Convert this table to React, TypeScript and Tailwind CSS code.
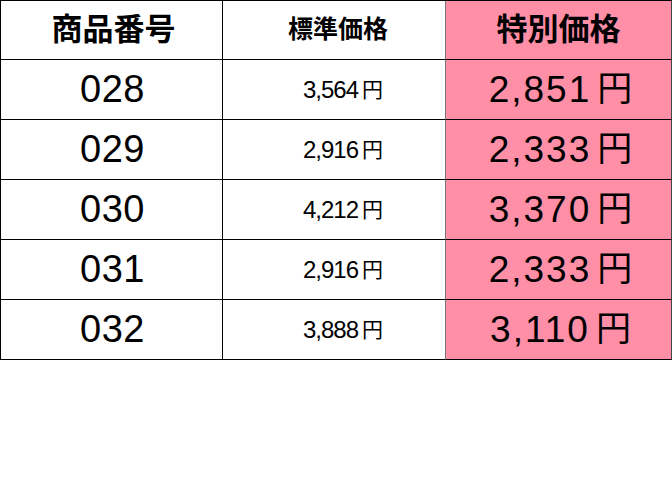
const rows = [
  { code: '028', normal: '3,564', special: '2,851' },
  { code: '029', normal: '2,916', special: '2,333' },
  { code: '030', normal: '4,212', special: '3,370' },
  { code: '031', normal: '2,916', special: '2,333' },
  { code: '032', normal: '3,888', special: '3,110' },
]

const font = { fontFamily: '"Liberation Sans", "Noto Sans CJK JP", sans-serif' }

export default function App() {
  return (
    <div className="w-[672px] h-[481px] bg-white text-black" style={font}>
      <div className="grid grid-cols-[222px_223px_226px] border-l border-t border-black">
        {/* Header */}
        <div className="h-[59px] border-r border-b border-black flex items-center justify-center text-[31px] font-bold pl-[4px]">
          商品番号
        </div>
        <div className="h-[59px] border-r border-b border-black border-r-[#777] flex items-center justify-center text-[25px] font-bold pl-[8px]">
          標準価格
        </div>
        <div className="h-[59px] border-r border-b border-black border-r-[#444] bg-[#ff8ea7] flex items-center justify-center text-[31px] font-bold">
          特別価格
        </div>

        {rows.map(r => (
          <div key={r.code} className="contents">
            <div className="h-[60px] border-r border-b border-black flex items-center justify-center text-[38px] tracking-[0.5px] pl-[2px]">
              {r.code}
            </div>
            <div className="h-[60px] border-r border-b border-black border-r-[#777] flex items-center justify-center pl-[18px]">
              <span className="text-[24px] tracking-[-1px]">{r.normal}</span>
              <span className="text-[21px] ml-[4px]">円</span>
            </div>
            <div className="h-[60px] border-r border-b border-black border-r-[#444] bg-[#ff8ea7] flex items-center justify-center pl-[4px]">
              <span className="text-[37px] tracking-[2px]">{r.special}</span>
              <span className="text-[35px] ml-[6px]">円</span>
            </div>
          </div>
        ))}
      </div>
    </div>
  )
}
